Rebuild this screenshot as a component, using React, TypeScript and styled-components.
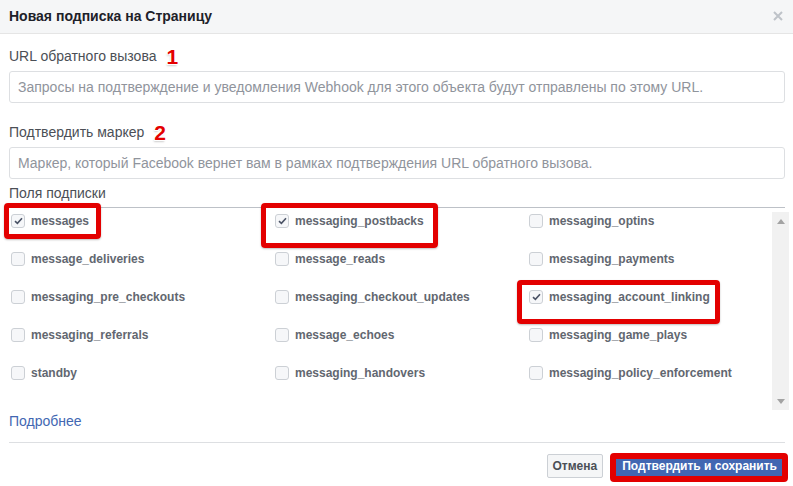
import React from "react";
import styled, { createGlobalStyle } from "styled-components";

const Global = createGlobalStyle`
  html, body { margin: 0; padding: 0; background: #fff; }
  body { font-family: "Liberation Sans", Arial, sans-serif; width: 793px; height: 486px; overflow: hidden; }
  * { box-sizing: border-box; }
`;

const Dialog = styled.div`
  width: 793px;
  height: 486px;
  background: #fff;
  display: flex;
  flex-direction: column;
`;

const Header = styled.div`
  height: 34px;
  background: #f5f6f7;
  border-bottom: 1px solid #e5e5e5;
  display: flex;
  align-items: center;
  justify-content: space-between;
  padding: 0 9px 2px 9px;
`;

const Title = styled.div`
  font-size: 14px;
  font-weight: bold;
  color: #1d2129;
`;

const Close = styled.button`
  border: 0;
  background: none;
  padding: 0;
  width: 12px;
  height: 12px;
  display: flex;
  align-items: center;
  justify-content: center;
  margin-top: 1px;
`;

const Body = styled.div`
  padding: 13px 8px 0 9px;
  display: flex;
  flex-direction: column;
`;

const Label = styled.div<{ $mt?: number }>`
  height: 18px;
  line-height: 18px;
  font-size: 14px;
  color: #4b4f56;
  display: flex;
  align-items: center;
  margin-top: ${(p) => p.$mt ?? 0}px;
`;

const Mark = styled.span`
  font-size: 21px;
  font-weight: bold;
  color: #e40000;
  margin-left: 10px;
  line-height: 18px;
  text-shadow: 1px 1px 0 #fff, -1px -1px 0 #fff, 1px -1px 0 #fff, -1px 1px 0 #fff,
    -1px 2px 2px rgba(0, 0, 0, 0.2);
  position: relative;
  top: 1px;
`;

const Input = styled.input`
  margin-top: 6px;
  height: 32px;
  width: 100%;
  border: 1px solid #dddfe2;
  border-radius: 3px;
  padding: 0 8px;
  font-family: "Liberation Sans", Arial, sans-serif;
  font-size: 14px;
  color: #1d2129;
  outline: none;
  &::placeholder { color: #90949c; }
`;

const Divider = styled.div<{ $mt: number }>`
  margin-top: ${(p) => p.$mt}px;
  border-top: 1px solid #bdc1c7;
`;

const ScrollRow = styled.div`
  margin-top: 4px;
  height: 198px;
  display: flex;
  margin-right: -4px;
`;

const List = styled.div`
  flex: 1;
  display: grid;
  grid-template-columns: 264px 254px 1fr;
  grid-auto-rows: 18px;
  row-gap: 20px;
  padding-left: 2px;
  align-content: start;
`;

const Cell = styled.label`
  position: relative;
  display: flex;
  align-items: center;
  gap: 6px;
  font-size: 12px;
  font-weight: bold;
  color: #626770;
  white-space: nowrap;
`;

const Box = styled.span<{ $checked: boolean }>`
  width: 14px;
  height: 14px;
  flex: none;
  border: 1px solid #ccd0d5;
  border-radius: 3px;
  background: #f6f7f9;
  display: flex;
  align-items: center;
  justify-content: center;
`;

const Frame = styled.span<{ $l: number; $t: number; $w: number; $h: number }>`
  position: absolute;
  left: ${(p) => p.$l}px;
  top: ${(p) => p.$t}px;
  width: ${(p) => p.$w}px;
  height: ${(p) => p.$h}px;
  border: 5px solid #e30000;
  border-radius: 4px;
  pointer-events: none;
  box-shadow: 0 1px 2px rgba(0, 0, 0, 0.25);
`;

const Scrollbar = styled.div`
  width: 17px;
  flex: none;
  background: #f1f1f1;
  display: flex;
  flex-direction: column;
  justify-content: space-between;
  align-items: center;
  padding: 7px 0 6px;
`;

const More = styled.a`
  margin-top: 2px;
  height: 18px;
  line-height: 18px;
  font-size: 14px;
  color: #4267b2;
  text-decoration: none;
`;

const Footer = styled.div`
  margin-top: 12px;
  border-top: 1px solid #dddfe2;
  padding-top: 11px;
  display: flex;
  justify-content: flex-end;
  gap: 12px;
  padding-right: 1px;
`;

const Button = styled.button<{ $primary?: boolean }>`
  position: relative;
  height: 24px;
  padding: 0 ${(p) => (p.$primary ? 6 : 5)}px;
  border-radius: 2px;
  font-family: "Liberation Sans", Arial, sans-serif;
  font-size: 12px;
  font-weight: bold;
  border: 1px solid ${(p) => (p.$primary ? "#4267b2" : "#ccd0d5")};
  background: ${(p) => (p.$primary ? "#4267b2" : "#f5f6f7")};
  color: ${(p) => (p.$primary ? "#fff" : "#4b4f56")};
`;

const ButtonFrame = styled.span`
  position: absolute;
  left: -6px;
  top: -2px;
  right: -5px;
  bottom: -5px;
  border: 6px solid #e30000;
  border-radius: 4px;
  pointer-events: none;
`;

type Field = { name: string; checked?: boolean; frame?: [number, number, number, number] };

const fields: Field[] = [
  { name: "messages", checked: true, frame: [-7, -9, 97, 36] },
  { name: "messaging_postbacks", checked: true, frame: [-14, -9, 177, 45] },
  { name: "messaging_optins" },
  { name: "message_deliveries" },
  { name: "message_reads" },
  { name: "messaging_payments" },
  { name: "messaging_pre_checkouts" },
  { name: "messaging_checkout_updates" },
  { name: "messaging_account_linking", checked: true, frame: [-12, -8, 203, 44] },
  { name: "messaging_referrals" },
  { name: "message_echoes" },
  { name: "messaging_game_plays" },
  { name: "standby" },
  { name: "messaging_handovers" },
  { name: "messaging_policy_enforcement" },
];

const Check = () => (
  <svg width="9" height="8" viewBox="0 0 9 8">
    <path d="M1 4.2 L3.4 6.4 L8 1.3" fill="none" stroke="#4b5366" strokeWidth="1.6" />
  </svg>
);

export default function App() {
  return (
    <>
      <Global />
      <Dialog>
        <Header>
          <Title>Новая подписка на Страницу</Title>
          <Close aria-label="close">
            <svg width="10" height="10" viewBox="0 0 10 10">
              <path d="M1 1 L9 9 M9 1 L1 9" stroke="#bec3c9" strokeWidth="2" />
            </svg>
          </Close>
        </Header>
        <Body>
          <Label>
            URL обратного вызова<Mark>1</Mark>
          </Label>
          <Input placeholder="Запросы на подтверждение и уведомления Webhook для этого объекта будут отправлены по этому URL." />
          <Label $mt={20}>
            Подтвердить маркер<Mark>2</Mark>
          </Label>
          <Input placeholder="Маркер, который Facebook вернет вам в рамках подтверждения URL обратного вызова." />
          <Label $mt={5}>Поля подписки</Label>
          <Divider $mt={5} />
          <ScrollRow>
            <List>
              {fields.map((f) => (
                <Cell key={f.name}>
                  <Box $checked={!!f.checked}>{f.checked && <Check />}</Box>
                  {f.name}
                  {f.frame && (
                    <Frame $l={f.frame[0]} $t={f.frame[1]} $w={f.frame[2]} $h={f.frame[3]} />
                  )}
                </Cell>
              ))}
            </List>
            <Scrollbar>
              <svg width="8" height="5" viewBox="0 0 8 5">
                <path d="M0 5 L4 0 L8 5 Z" fill="#a3a3a3" />
              </svg>
              <svg width="8" height="5" viewBox="0 0 8 5">
                <path d="M0 0 L8 0 L4 5 Z" fill="#a3a3a3" />
              </svg>
            </Scrollbar>
          </ScrollRow>
          <More href="#">Подробнее</More>
          <Footer>
            <Button>Отмена</Button>
            <Button $primary>
              Подтвердить и сохранить
              <ButtonFrame />
            </Button>
          </Footer>
        </Body>
      </Dialog>
    </>
  );
}
